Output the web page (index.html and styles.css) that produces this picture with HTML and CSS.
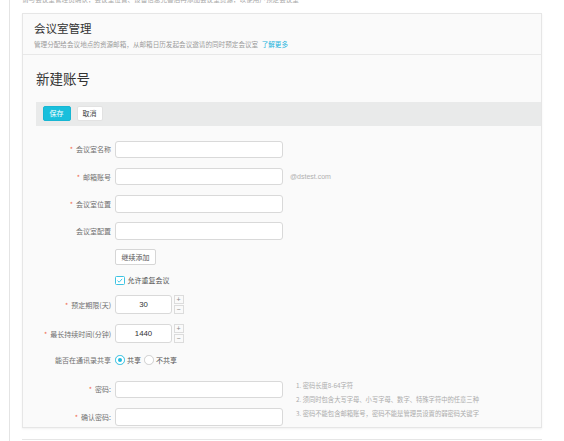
FILE: index.html
```html
<!DOCTYPE html>
<html lang="zh-CN">
<head>
<meta charset="utf-8">
<title>会议室管理</title>
<link rel="stylesheet" href="styles.css">
</head>
<body>
<div class="page">
  <div class="topline"><span>请与会议室管理员确认，会议室位置、设备信息完善后再添加会议室资源，以便用户预定会议室</span></div>
  <div class="card">
    <div class="card-head">
      <h1 class="title">会议室管理</h1>
      <p class="desc">管理分配给会议地点的资源邮箱，从邮箱日历发起会议邀请的同时预定会议室 <a class="link" href="#">了解更多</a></p>
    </div>
    <div class="section">
      <h2 class="sub">新建账号</h2>
      <div class="toolbar">
        <button class="btn btn-primary">保存</button>
        <button class="btn btn-plain">取消</button>
      </div>
      <div class="form">
        <div class="row r-input">
          <label class="lbl"><span class="star">*</span>会议室名称</label>
          <input class="inp" type="text">
        </div>
        <div class="row r-input">
          <label class="lbl"><span class="star">*</span>邮箱账号</label>
          <input class="inp" type="text">
          <span class="suffix">@dstest.com</span>
        </div>
        <div class="row r-input">
          <label class="lbl"><span class="star">*</span>会议室位置</label>
          <input class="inp" type="text">
        </div>
        <div class="row r-input r-last">
          <label class="lbl">会议室配置</label>
          <input class="inp" type="text">
        </div>
        <div class="row r-btn">
          <span></span>
          <button class="btn-add">继续添加</button>
        </div>
        <div class="row r-check">
          <span></span>
          <label class="check"><span class="box"><svg viewBox="0 0 10 10" width="9" height="9"><path d="M2 5.2 L4.2 7.3 L8.2 2.8" fill="none" stroke="#29bfe0" stroke-width="1.2"/></svg></span>允许重复会议</label>
        </div>
        <div class="row r-num">
          <label class="lbl"><span class="star">*</span>预定期限(天)</label>
          <div class="num">
            <input class="num-inp" type="text" value="30">
            <div class="steps"><span class="step">+</span><span class="step">−</span></div>
          </div>
        </div>
        <div class="row r-num">
          <label class="lbl"><span class="star">*</span>最长持续时间(分钟)</label>
          <div class="num">
            <input class="num-inp" type="text" value="1440">
            <div class="steps"><span class="step">+</span><span class="step">−</span></div>
          </div>
        </div>
        <div class="row r-radio">
          <label class="lbl">能否在通讯录共享</label>
          <div class="radios">
            <label class="radio"><span class="dot on"></span>共享</label>
            <label class="radio"><span class="dot"></span>不共享</label>
          </div>
        </div>
        <div class="pw">
          <div class="pw-fields">
            <div class="row r-pw1">
              <label class="lbl"><span class="star">*</span>密码:</label>
              <input class="inp" type="password">
            </div>
            <div class="row r-pw2">
              <label class="lbl"><span class="star">*</span>确认密码:</label>
              <input class="inp" type="password">
            </div>
          </div>
          <ol class="hints">
            <li>1. 密码长度8-64字符</li>
            <li>2. 须同时包含大写字母、小写字母、数字、特殊字符中的任意三种</li>
            <li>3. 密码不能包含邮箱账号，密码不能是管理员设置的弱密码关键字</li>
          </ol>
        </div>
      </div>
    </div>
  </div>
  <div class="next-card"></div>
</div>
</body>
</html>
```

FILE: styles.css
```css
* { box-sizing: border-box; }

body {
  margin: 0;
  background: #ffffff;
  font-family: "Noto Sans CJK SC", "Noto Sans", "Liberation Sans", sans-serif;
  color: #333;
}

.page {
  margin-left: 9px;
  border-left: 1px solid #e4e4e4;
  padding-left: 12px;
  height: 441px;
  overflow: hidden;
}

.topline {
  height: 3px;
  overflow: hidden;
  font-size: 6.6px;
  color: #a8a8a8;
}
.topline span {
  display: block;
  line-height: 8px;
  margin-top: -5.5px;
  white-space: nowrap;
}

.card {
  margin-top: 10px;
  width: 520px;
  height: 415px;
  background: #fafafa;
  border: 1px solid #e6e6e6;
  box-shadow: 0 1px 2px rgba(0, 0, 0, 0.06);
}

.card-head {
  height: 41px;
  padding: 7px 11px 0;
  border-bottom: 1px solid #e8e8e8;
}

.title {
  margin: 0;
  font-size: 11.5px;
  line-height: 14px;
  font-weight: 400;
  color: #333;
}

.desc {
  margin: 3.5px 0 0;
  font-size: 6.6px;
  line-height: 10px;
  color: #9a9a9a;
  white-space: nowrap;
}

.link {
  color: #26b3dc;
  text-decoration: none;
  margin-left: 2px;
}

.section {
  padding-left: 13px;
}

.sub {
  margin: 14px 0 0;
  font-size: 13.5px;
  line-height: 18px;
  font-weight: 400;
  color: #333;
}

.toolbar {
  margin-top: 14.5px;
  height: 24.5px;
  background: #e9eaea;
  display: flex;
  align-items: center;
  gap: 6px;
  padding-left: 6.5px;
}

.btn {
  height: 15px;
  padding: 0;
  font-family: inherit;
  font-size: 7px;
  line-height: 13px;
  border-radius: 2px;
  cursor: pointer;
}

.btn-primary {
  width: 28px;
  background: #19bfdc;
  border: 1px solid #17b6d3;
  color: #ffffff;
}

.btn-plain {
  width: 26px;
  background: #ffffff;
  border: 1px solid #e2e2e2;
  color: #444;
}

.form {
  padding-top: 14.7px;
}

.row {
  display: grid;
  grid-template-columns: 75px auto auto;
  column-gap: 4px;
  align-items: center;
  justify-content: start;
}

.lbl {
  text-align: right;
  font-size: 7px;
  line-height: 10px;
  color: #6f6f6f;
  white-space: nowrap;
}

.star {
  color: #f06a4a;
  margin-right: 3px;
}

.inp {
  display: block;
  width: 168px;
  height: 17.5px;
  margin: 0;
  padding: 0 4px;
  background: #ffffff;
  border: 1px solid #d9d9d9;
  border-radius: 3px;
  font-family: inherit;
  font-size: 7px;
  outline: none;
}

.suffix {
  margin-left: 3px;
  font-family: "Liberation Sans", sans-serif;
  font-size: 7px;
  color: #b0b0b0;
}

.r-input { margin-bottom: 9.7px; }
.r-last { margin-bottom: 0; }

.r-btn { margin-top: 9px; }

.btn-add {
  width: 41px;
  height: 16px;
  padding: 0;
  background: #ffffff;
  border: 1px solid #d6d6d6;
  border-radius: 2px;
  font-family: inherit;
  font-size: 7px;
  color: #555;
}

.r-check { margin-top: 10.3px; }

.check {
  display: flex;
  align-items: center;
  gap: 3px;
  font-size: 7px;
  line-height: 10px;
  color: #555;
}

.box {
  width: 9.5px;
  height: 9px;
  border: 1px solid #3cc3e2;
  border-radius: 1.5px;
  background: #ffffff;
  display: flex;
  align-items: center;
  justify-content: center;
}
.box svg { display: block; }

.r-num { margin-top: 10px; }

.num {
  display: flex;
  align-items: center;
  gap: 1.5px;
}

.num-inp {
  width: 57px;
  height: 19px;
  margin: 0;
  padding: 0;
  background: #ffffff;
  border: 1px solid #d9d9d9;
  border-radius: 3px;
  text-align: center;
  font-family: "Liberation Sans", sans-serif;
  font-size: 7.8px;
  color: #333;
  outline: none;
}

.steps {
  display: flex;
  flex-direction: column;
  gap: 1.5px;
}

.step {
  width: 10px;
  height: 8.7px;
  border: 1px solid #dcdcdc;
  background: #fafafa;
  color: #888;
  font-family: "Liberation Sans", sans-serif;
  font-size: 7px;
  line-height: 7px;
  text-align: center;
}

.r-radio { margin-top: 11.8px; }

.radios {
  display: flex;
  align-items: center;
  gap: 3px;
}

.radio {
  display: flex;
  align-items: center;
  gap: 2.5px;
  font-size: 7px;
  line-height: 10px;
  color: #555;
}

.dot {
  width: 9.5px;
  height: 9.5px;
  border-radius: 50%;
  border: 1px solid #cfcfcf;
  background: #ffffff;
  position: relative;
}

.dot.on {
  border-color: #2ebfe0;
}
.dot.on::after {
  content: "";
  position: absolute;
  left: 1.75px;
  top: 1.75px;
  width: 4px;
  height: 4px;
  border-radius: 50%;
  background: #1fbbe0;
}

.pw {
  margin-top: 15.8px;
  display: flex;
  align-items: flex-start;
}

.r-pw1 .inp { height: 17px; }
.r-pw2 { margin-top: 10px; }
.r-pw2 .inp { height: 18px; }

.hints {
  list-style: none;
  margin: -1.3px 0 0 9px;
  padding: 0;
  font-size: 6.3px;
  line-height: 14px;
  color: #acacac;
  white-space: nowrap;
}

.next-card {
  margin-top: 11px;
  width: 520px;
  height: 20px;
  border-top: 1px solid #e6e6e6;
}
```
